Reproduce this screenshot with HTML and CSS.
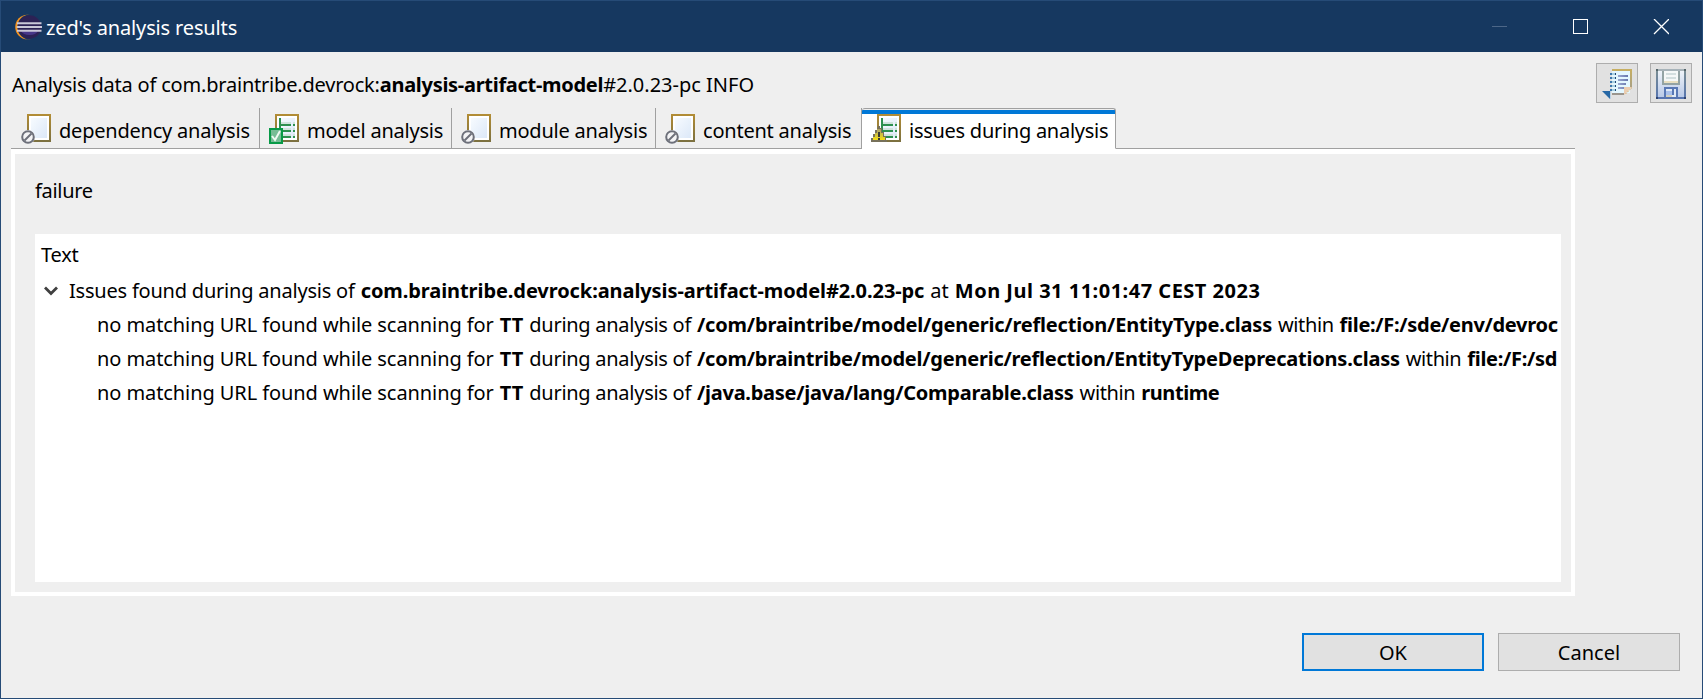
FILE: index.html
```html
<!DOCTYPE html>
<html lang="en">
<head>
<meta charset="utf-8">
<title>zed's analysis results</title>
<link rel="stylesheet" href="styles.css">
</head>
<body>
<svg class="defs" width="0" height="0">
  <defs>
    <linearGradient id="frame" x1="0" y1="0" x2="0" y2="1"><stop offset="0" stop-color="#b38d35"/><stop offset="1" stop-color="#7b7040"/></linearGradient>
    <linearGradient id="paper" x1="0" y1="0" x2="1" y2="1"><stop offset="0" stop-color="#f7fbff"/><stop offset="1" stop-color="#dce8f8"/></linearGradient>
    <linearGradient id="steel" x1="0" y1="0" x2="0" y2="1"><stop offset="0" stop-color="#f2f6fa"/><stop offset="1" stop-color="#b5c6e6"/></linearGradient>
    <linearGradient id="edge" x1="0" y1="0" x2="0" y2="1"><stop offset="0" stop-color="#7c8f92"/><stop offset="1" stop-color="#5674b0"/></linearGradient>
    <linearGradient id="gold" x1="0" y1="0" x2="0" y2="1"><stop offset="0" stop-color="#c8af60"/><stop offset="1" stop-color="#a9a184"/></linearGradient>
    <linearGradient id="bars" x1="0" y1="0" x2="1" y2="0"><stop offset="0" stop-color="#9aa9d0"/><stop offset="1" stop-color="#6676ad"/></linearGradient>
    <linearGradient id="hazard" x1="0" y1="0" x2="0" y2="1"><stop offset="0" stop-color="#aaa06a"/><stop offset="1" stop-color="#f4df12"/></linearGradient>
    <symbol id="page" viewBox="0 0 30 30">
      <path fill="url(#frame)" d="M6 0h24v28H6z"/><path fill="#fff" d="M8 2h20v24H8z"/><path fill="url(#paper)" d="M10 4h16v20H10z"/>
    </symbol>
    <symbol id="empty" viewBox="0 0 30 30">
      <use href="#page"/>
      <circle cx="7" cy="23" r="7" fill="#efefef"/><circle cx="7" cy="23" r="5.8" fill="#f4f4f6" stroke="#6d707a" stroke-width="2"/><path d="M3.5 26.5l7-7" stroke="#6d707a" stroke-width="2"/>
    </symbol>
    <symbol id="tree" viewBox="0 0 30 30">
      <use href="#page"/>
      <path fill="#cfe3dc" d="M12 8h10v2H12zM24 8h2v2h-2zM12 14h10v2H12zM24 14h2v2h-2zM12 20h10v2H12zM24 20h2v2h-2z"/>
      <path fill="#2d9050" d="M10 4h2v20h-2zM12 10h10v2H12zM24 10h2v2h-2zM12 16h10v2H12zM24 16h2v2h-2zM12 22h10v2H12zM24 22h2v2h-2z"/>
    </symbol>
  </defs>
</svg>
<div class="window">
  <header class="titlebar">
    <svg class="logo" viewBox="0 0 27 26">
      <circle cx="12.5" cy="13" r="12.3" fill="#f7941e"/><circle cx="15" cy="13" r="12.6" fill="#163860"/><circle cx="14.5" cy="13" r="11.8" fill="#2c2255"/>
      <path d="M6 17h17a9 6 0 0 1-17 0z" fill="#473788"/>
      <path d="M2 9.2h24.5M1.700 13h25.300M2 16.800h24.500" stroke="#c9c8d8" stroke-width="2"/>
    </svg>
    <h1 class="title">zed's analysis results</h1>
    <svg class="controls" viewBox="0 0 177 16">
      <path d="M0 7.500h15" stroke="#4d6788"/><rect x="81.500" y=".5" width="14" height="14" fill="none" stroke="#fff"/><path d="M162 0l15 15M177 0l-15 15" stroke="#fff" stroke-width="1.300"/>
    </svg>
  </header>
  <main class="body">
    <div class="summary"><span class="h1a">Analysis data of com.braintribe.devrock:</span><b class="h1b">analysis-artifact-model</b><span class="h1c">#2.0.23-pc INFO</span></div>
    <div class="tools">
      <button class="tool" aria-label="Copy"><svg width="30" height="30" viewBox="0 0 30 30">
        <path fill="#e3f7ff" d="M10 2h18v22H10z"/><path fill="url(#gold)" d="M10 0h20v18h-2V2H10z"/><path fill="#9a958d" d="M10 24h12v2H10z"/>
        <path fill="#a9cfe0" d="M8 4h6v2H8zM8 8h6v2H8zM8 12h6v2H8zM8 16h6v2H8zM8 20h6v2H8z"/>
        <path fill="#3c79ae" d="M8 4h2v2H8zM8 8h2v2H8zM8 12h2v2H8zM8 16h2v2H8zM8 20h2v2H8z"/><path fill="#1f4774" d="M13 4h1v2h-1zM13 8h1v2h-1zM13 12h1v2h-1zM13 16h1v2h-1zM13 20h1v2h-1z"/>
        <path fill="url(#bars)" d="M16 6h10v2H16zM16 10h10v2H16zM16 14h8v2h-8zM16 18h6v2h-6z"/>
        <path fill="#ebcdb1" d="M22 18h8l-8 8z"/><path d="M30 18.500l-7 7" stroke="#d5ad69" stroke-dasharray="1.500 1"/><path fill="#2768a5" d="M0 22h8v8z"/><path fill="#b8d2e5" d="M8 22h1v8H8z"/>
      </svg></button>
      <button class="tool" aria-label="Save"><svg width="30" height="30" viewBox="0 0 30 30">
        <path fill="url(#steel)" d="M0 0h30v30H0z"/><path fill="url(#edge)" d="M0 0h2v30H0zM28 0h2v30h-2z"/><path fill="#a7b3b9" d="M2 0h26v2H2z"/><path fill="#5674b0" d="M2 28h26v2H2z"/>
        <path fill="#54656a" d="M0 0h2v2H0zM28 0h2v2h-2z"/><path fill="#31456f" d="M0 28h2v2H0zM28 28h2v2h-2z"/>
        <path fill="#93a3a4" d="M6 2h18v14H6z"/><path fill="#f5f8f8" d="M8 2h14v12H8z"/><path fill="#d3dedf" d="M10 4h10v2H10zM10 8h10v2H10z"/><path fill="#e8dfc1" d="M8 12h14v2H8z"/>
        <path fill="#5878b5" d="M8 18h14v10H8z"/><path fill="#dfe9f6" d="M10 20h10v8H10z"/><path fill="#a9c0eb" d="M10 22h8v4h-8z"/><path fill="#d2cfc0" d="M10 26h6v2h-6z"/><path fill="#5878b5" d="M16 20h2v6h-2z"/>
      </svg></button>
    </div>
    <nav class="tabs">
      <div class="tab t1"><svg class="ic"><use href="#empty"/></svg><span>dependency analysis</span></div>
      <div class="tab t2"><svg class="ic" viewBox="0 0 30 30"><use href="#tree"/><path fill="#079a47" d="M0 14h14v16H0z"/><path fill="#76bd95" d="M2 16h10v12H2z"/><path d="M3 22l3 4 5-9" fill="none" stroke="#effaf3" stroke-width="2"/></svg><span>model analysis</span></div>
      <div class="tab t3"><svg class="ic"><use href="#empty"/></svg><span>module analysis</span></div>
      <div class="tab t4"><svg class="ic"><use href="#empty"/></svg><span>content analysis</span></div>
      <div class="tab t5 active"><svg class="ic" viewBox="0 0 30 30"><use href="#tree"/><path fill="#77715b" d="M7 12h2v2h2v4h2v4h2v4h1v2H0v-4h2v-4h2v-4h2z"/><path fill="url(#hazard)" d="M6 15h4v4h2v4h2v3H2v-3h2v-4h2z"/><path fill="#3a3933" d="M7 18h2v5H7zM7 24h2v2H7z"/></svg><span>issues during analysis</span></div>
      <div class="rest"></div>
    </nav>
    <section class="panel">
      <div class="status">failure</div>
      <div class="list">
        <div class="head">Text</div>
        <div class="row parent"><svg class="chev" viewBox="0 0 14 10"><path d="M1 1.500l6 6 6-6" fill="none" stroke="#404040" stroke-width="2.800"/></svg><span class="pa">Issues found during analysis of</span> <b class="pb">com.braintribe.devrock:analysis-artifact-model#2.0.23-pc</b> <span>at</span> <b class="pc">Mon Jul 31 11:01:47 CEST 2023</b></div>
        <div class="row child"><span class="ca">no matching URL found while scanning for</span> <b>TT</b> <span class="cb">during analysis of</span> <b class="c1">/com/braintribe/model/generic/reflection/EntityType.class</b> <span class="cw">within</span> <b class="cf">file:/F:/sde/env/devroc</b></div>
        <div class="row child"><span class="ca">no matching URL found while scanning for</span> <b>TT</b> <span class="cb">during analysis of</span> <b class="c2">/com/braintribe/model/generic/reflection/EntityTypeDeprecations.class</b> <span class="cw">within</span> <b class="cf">file:/F:/sd</b></div>
        <div class="row child"><span class="ca">no matching URL found while scanning for</span> <b>TT</b> <span class="cb">during analysis of</span> <b class="c3">/java.base/java/lang/Comparable.class</b> <span class="cw">within</span> <b class="cr">runtime</b></div>
      </div>
    </section>
    <footer class="actions"><button class="btn ok">OK</button><button class="btn">Cancel</button></footer>
  </main>
</div>
</body>
</html>
```
FILE: styles.css
```css
* { box-sizing: border-box; }
body { margin: 0; font-family: "Noto Sans", "Open Sans", sans-serif; font-size: 20px; color: #000; }
b { font-weight: 700; }
.defs { position: absolute; }
.window { width: 1703px; height: 699px; background: #efefef; border: 1px solid #264b77; overflow: hidden; }
.titlebar { height: 51px; background: #163860; display: flex; align-items: center; padding: 0 33px 0 14px; }
.logo { width: 27px; height: 26px; margin-right: 4px; }
.title { margin: 0; font-size: 20px; font-weight: 400; color: #fff; line-height: 28px; padding-top: 2px; letter-spacing: -.15px; }
.controls { width: 177px; height: 16px; margin-left: auto; }
.body { display: grid; grid-template-columns: 1564px 1fr; grid-template-rows: 56px 41px 447px 1fr; padding-left: 10px; height: 646px; }
.summary { line-height: 28px; padding: 19px 0 0 1px; white-space: nowrap; }
.h1a { letter-spacing: -.2px; }
.h1b { letter-spacing: -.29px; }
.tools { grid-row: 1 / 3; grid-column: 2; display: flex; gap: 12px; padding: 11px 0 0 21px; }
.tool { width: 42px; height: 40px; padding: 0; border: 1px solid #adadad; background: #e1e1e1; display: flex; align-items: center; justify-content: center; }
.tool svg { margin-top: 1px; }
.tabs { grid-row: 2; grid-column: 1; display: flex; }
.tab { height: 41px; display: flex; align-items: flex-start; padding: 6px 0 0 10px; border-right: 1px solid #a0a0a0; border-bottom: 1px solid #a0a0a0; white-space: nowrap; letter-spacing: -.22px; }
.tab span { line-height: 28px; padding-top: 3px; }
.ic { width: 30px; height: 30px; margin-right: 8px; flex: none; }
.t1 { width: 249px; }
.t2 { width: 192px; padding-left: 9px; }
.t3 { width: 204px; padding-left: 9px; }
.t4 { width: 206px; padding-left: 9px; }
.t5 { width: 254px; padding-left: 9px; letter-spacing: -.27px; }
.active { background: linear-gradient(#efefef 1px, #0078d7 1px, #0078d7 5px, #fff 5px); border-bottom-color: #fff; border-top: 1px solid #a0a0a0; padding-top: 5px; border-radius: 3px 3px 0 0; }
.rest { flex: 1; border-bottom: 1px solid #a0a0a0; }
.panel { grid-row: 3; grid-column: 1; border: 4px solid #fff; border-top-width: 5px; padding: 22px 10px 10px 20px; display: flex; flex-direction: column; }
.status { line-height: 28px; height: 58px; padding-top: 1px; letter-spacing: -.3px; }
.list { flex: 1; background: #fff; overflow: hidden; padding: 7px 0 0 6px; }
.head { line-height: 28px; height: 33px; letter-spacing: -.2px; }
.row { line-height: 34px; height: 34px; white-space: nowrap; }
.parent { display: flex; align-items: center; gap: 6px; }
.chev { width: 14px; height: 10px; margin: 0 5px 0 3px; }
.child { padding-left: 56px; display: flex; gap: 6px; }
.pa { letter-spacing: -.21px; }
.pb { letter-spacing: -.08px; }
.pc { letter-spacing: .5px; }
.ca { letter-spacing: -.08px; }
.cb { letter-spacing: -.27px; }
.c1 { letter-spacing: -.2px; }
.c2 { letter-spacing: -.23px; }
.c3 { letter-spacing: -.26px; }
.cw { letter-spacing: -.4px; }
.cf { letter-spacing: -.3px; }
.cr { letter-spacing: -.4px; }
.actions { grid-row: 4; grid-column: 1 / 3; display: flex; justify-content: flex-end; gap: 14px; padding: 37px 22px 0 0; }
.btn { width: 182px; height: 38px; border: 1px solid #adadad; background: #e1e1e1; color: #000; font: 20px "Noto Sans", sans-serif; padding: 1px 0 0; }
.ok { border: 2px solid #0078d7; }
```
